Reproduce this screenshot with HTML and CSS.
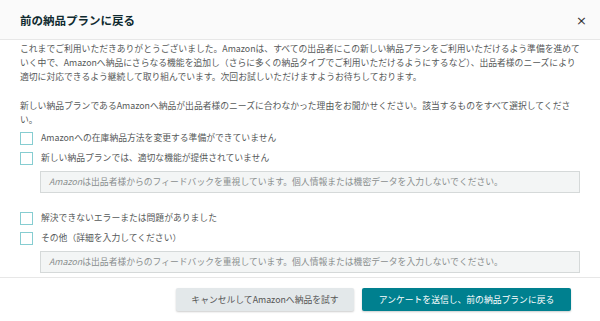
FILE: index.html
```html
<!DOCTYPE html>
<html lang="ja">
<head>
    <meta charset="UTF-8">
    <meta name="viewport" content="width=device-width, initial-scale=1.0">
    <title>前の納品プランに戻る</title>
    <link rel="stylesheet" href="styles.css">
</head>
<body>
    <div class="modal">
        <div class="modal-header">
            <h2>前の納品プランに戻る</h2>
            <span class="close">&times;</span>
        </div>

        <div class="modal-body">
            <p>これまでご利用いただきありがとうございました。Amazonは、すべての出品者にこの新しい納品プランをご利用いただけるよう準備を進めていく中で、Amazonへ納品にさらなる機能を追加し（さらに多くの納品タイプでご利用いただけるようにするなど）、出品者様のニーズにより適切に対応できるよう継続して取り組んでいます。次回お試しいただけますようお待ちしております。</p>
            <p>新しい納品プランであるAmazonへ納品が出品者様のニーズに合わなかった理由をお聞かせください。該当するものをすべて選択してください。</p>

            <div class="group">
                <label class="option"><span class="box"></span>Amazonへの在庫納品方法を変更する準備ができていません</label>
                <label class="option"><span class="box"></span>新しい納品プランでは、適切な機能が提供されていません</label>
                <div class="feedback"><i>Amazon</i>は出品者様からのフィードバックを重視しています。個人情報または機密データを入力しないでください。</div>
            </div>

            <div class="group">
                <label class="option"><span class="box"></span>解決できないエラーまたは問題がありました</label>
                <label class="option"><span class="box"></span>その他（詳細を入力してください）</label>
                <div class="feedback"><i>Amazon</i>は出品者様からのフィードバックを重視しています。個人情報または機密データを入力しないでください。</div>
            </div>
        </div>

        <div class="modal-footer">
            <button class="btn-cancel">キャンセルしてAmazonへ納品を試す</button>
            <button class="btn-submit">アンケートを送信し、前の納品プランに戻る</button>
        </div>
    </div>
</body>
</html>
```

FILE: styles.css
```css
body {
    font-family: 'Noto Sans CJK JP', 'Liberation Sans', sans-serif;
    background-color: #fff;
    margin: 0;
    padding: 0;
}

.modal {
    width: 600px;
    height: 321px;
    display: flex;
    flex-direction: column;
    overflow: hidden;
}

.modal-header {
    height: 39px;
    background-color: #fafafa;
    border-bottom: 1px solid #e7e7e7;
    display: flex;
    align-items: center;
    justify-content: space-between;
    padding: 0 13px 0 20px;
    flex-shrink: 0;
}

h2 {
    margin: 0;
    font-size: 11.5px;
    font-weight: bold;
    color: #0f2a2f;
}

.close {
    font-family: 'DejaVu Sans', sans-serif;
    font-size: 13px;
    color: #333;
    margin-top: 1px;
}

.modal-body {
    flex: 1;
    padding: 2px 20px 0;
    overflow: hidden;
    font-size: 8.8px;
    line-height: 14px;
    color: #565959;
}

p {
    margin: 0 0 15px;
}

p + p {
    margin-bottom: 1px;
}

.group {
    margin-bottom: 15px;
}

.option {
    display: flex;
    align-items: center;
    height: 20px;
    gap: 8px;
}

.box {
    width: 11px;
    height: 11px;
    border: 1px solid #86cdd1;
    background: #fff;
    flex-shrink: 0;
}

.feedback {
    margin: 3px 0 0 20px;
    height: 20px;
    line-height: 20px;
    padding: 0 8px;
    background-color: #f3f5f5;
    border: 1px solid #d5d9d9;
    color: #8a8f8f;
}

.modal-footer {
    height: 43px;
    border-top: 1px solid #e7e7e7;
    display: flex;
    align-items: center;
    justify-content: flex-end;
    gap: 8px;
    padding: 0 29px 0 0;
    flex-shrink: 0;
}

button {
    height: 23px;
    border: none;
    border-radius: 2px;
    font-family: inherit;
    font-size: 8.8px;
    cursor: pointer;
    box-shadow: 0 1px 2px rgba(0, 0, 0, 0.2);
}

.btn-cancel {
    width: 178px;
    background-color: #e3e8ea;
    color: #555;
}

.btn-submit {
    width: 209px;
    background-color: #00808f;
    color: #fff;
}
```
